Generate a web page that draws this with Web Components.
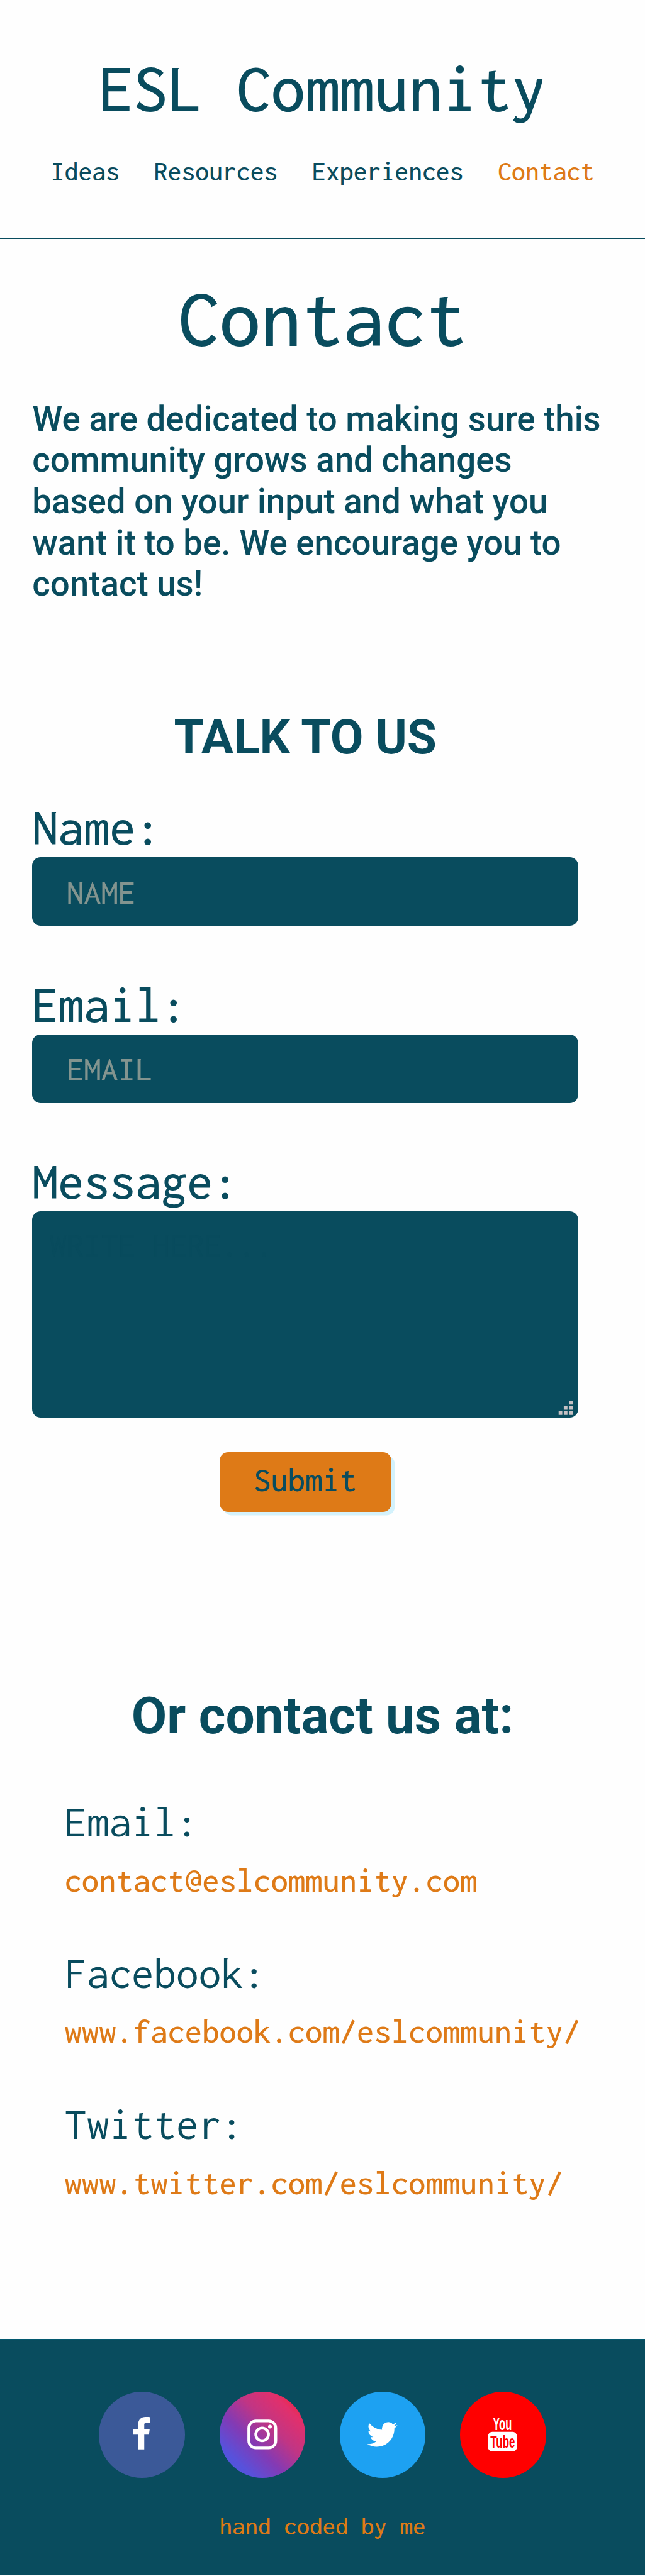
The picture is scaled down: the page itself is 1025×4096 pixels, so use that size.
<!DOCTYPE html>
<html lang="en">
<head>
<meta charset="utf-8">
<title>ESL Community - Contact</title>
<style>
  /* 1rem is one unit of a 375-unit wide layout */
  html { font-size: calc(100vw / 375); }
  body {
    margin: 0;
    --teal: #094c5e;
    --orange: #de7a17;
    --paper: #fefefe;
    --mono: Inconsolata, "Liberation Mono", monospace;
    --sans: Roboto, "Liberation Sans", sans-serif;
    background: var(--paper);
    color: var(--teal);
    font-family: var(--mono);
    font-weight: 500;
  }
</style>
</head>
<body>
<esl-page>
  <site-header slot="header" name="ESL Community">
    <nav-link>Ideas</nav-link>
    <nav-link>Resources</nav-link>
    <nav-link>Experiences</nav-link>
    <nav-link current>Contact</nav-link>
  </site-header>
  <page-intro heading="Contact">We are dedicated to making sure this community grows and changes based on your input and what you want it to be. We encourage you to contact us!</page-intro>
  <contact-form heading="TALK TO US" action="Submit">
    <form-field label="Name:">NAME</form-field>
    <form-field label="Email:">EMAIL</form-field>
    <form-field label="Message:" multiline>WRITE HERE...</form-field>
  </contact-form>
  <contact-list heading="Or contact us at:">
    <contact-item label="Email:">contact@eslcommunity.com</contact-item>
    <contact-item label="Facebook:">www.facebook.com/eslcommunity/</contact-item>
    <contact-item label="Twitter:">www.twitter.com/eslcommunity/</contact-item>
  </contact-list>
  <site-footer slot="footer" credit="hand coded by me">
    <social-icon kind="facebook"></social-icon>
    <social-icon kind="instagram"></social-icon>
    <social-icon kind="twitter"></social-icon>
    <social-icon kind="youtube"></social-icon>
  </site-footer>
</esl-page>

<script>
const define = (tag, render) => customElements.define(tag, class extends HTMLElement {
  connectedCallback() {
    if (this.shadowRoot) return;
    this.attachShadow({ mode: 'open' }).innerHTML = render(this);
  }
});
const attr = (el, name) => el.getAttribute(name) || '';

define('esl-page', () => `
  <style>
    :host { display: flex; flex-direction: column; height: 1498.2rem; overflow: hidden; }
    main { flex: 1; }
  </style>
  <slot name="header"></slot><main><slot></slot></main><slot name="footer"></slot>`);

define('site-header', el => `
  <style>
    :host { display: block; box-sizing: border-box; height: 139rem; padding-top: 30.6rem; border-bottom: 1rem solid var(--teal); }
    .name { font-size: 40rem; line-height: 42rem; text-align: center; }
    nav { display: flex; justify-content: center; gap: 20rem; margin-top: 18.4rem; }
  </style>
  <div class="name">${attr(el, 'name')}</div><nav><slot></slot></nav>`);

define('nav-link', () => `
  <style>
    :host { display: block; font-size: 16rem; line-height: 17rem; }
    :host([current]) { color: var(--orange); }
  </style><slot></slot>`);

define('page-intro', el => `
  <style>
    :host { display: block; padding: 21.3rem 18.75rem 0; }
    h1 { margin: 0; font-weight: 500; font-size: 48rem; line-height: 50rem; text-align: center; }
    p { margin: 21.6rem 0 0; font: 500 20rem/24rem var(--sans); }
  </style>
  <h1>${attr(el, 'heading')}</h1><p><slot></slot></p>`);

define('contact-form', el => `
  <style>
    :host { display: flex; flex-direction: column; width: 317.5rem; margin: 60.6rem 0 0 18.75rem; }
    h2 { margin: 0 0 20.7rem; font: 700 28rem/33rem var(--sans); text-align: center; }
    .fields { display: flex; flex-direction: column; gap: 30.5rem; }
    button { align-self: center; width: 100rem; height: 35rem; margin: 20rem 0 0; padding: 0 0 2.8rem; border: 0; border-radius: 5rem;
      background: var(--orange); color: var(--teal); box-shadow: 2rem 2rem 0 #d4f2fc; font: 500 20rem/21rem var(--mono); }
  </style>
  <h2>${attr(el, 'heading')}</h2><div class="fields"><slot></slot></div><button>${attr(el, 'action')}</button>`);

define('form-field', el => `
  <style>
    :host { display: block; }
    .label { font-size: 30rem; line-height: 31rem; margin-bottom: 1.5rem; }
    .box { box-sizing: border-box; display: flex; align-items: center; height: 40rem; padding: 0.6rem 20rem 0; border-radius: 5rem;
      background: var(--teal); color: #83948f; font-size: 20rem; line-height: 21rem; }
    .area { height: 120rem; align-items: flex-start; justify-content: space-between; padding: 9.2rem 3rem 1.3rem 10rem; color: #084b5d; }
    svg { width: 8.6rem; height: 8.6rem; align-self: flex-end; }
  </style>
  <div class="label">${attr(el, 'label')}</div>
  <div class="box ${el.hasAttribute('multiline') ? 'area' : ''}"><span><slot></slot></span>${el.hasAttribute('multiline') ? `
    <svg viewBox="0 0 25.8 25.8" fill="#c6c1c4"><path d="M18.9 .4h6.4v6.4h-6.4zM9.8 9.5h6.4v6.4h-6.4zM18.9 9.5h6.4v6.4h-6.4zM.8 18.5h6.4v6.4h-6.4zM9.8 18.5h6.4v6.4h-6.4zM18.9 18.5h6.4v6.4h-6.4z"/></svg>` : ''}</div>`);

define('contact-list', el => `
  <style>
    :host { display: block; margin-top: 101.2rem; }
    h2 { margin: 0 0 30.6rem; font: 700 30rem/35rem var(--sans); text-align: center; }
    .items { display: flex; flex-direction: column; gap: 30.3rem; padding-left: 37.5rem; }
  </style>
  <h2>${attr(el, 'heading')}</h2><div class="items"><slot></slot></div>`);

define('contact-item', el => `
  <style>
    :host { display: flex; flex-direction: column; gap: 9.7rem; }
    .label { font-weight: 400; font-size: 26rem; line-height: 27rem; }
    .link { color: var(--orange); font-size: 20rem; line-height: 21rem; }
  </style>
  <div class="label">${attr(el, 'label')}</div><div class="link"><slot></slot></div>`);

define('site-footer', el => `
  <style>
    :host { display: block; box-sizing: border-box; height: 137.5rem; padding-top: 30rem; border-top: 1rem solid #02586f; background: var(--teal); }
    .icons { display: flex; justify-content: center; gap: 20rem; }
    .credit { margin-top: 20.1rem; color: var(--orange); font-size: 15rem; line-height: 16rem; text-align: center; }
  </style>
  <div class="icons"><slot></slot></div><div class="credit">${attr(el, 'credit')}</div>`);

const icons = {
  facebook: ['#3b5998', '<path d="M89.3 44.3V54H83.5C80 54 79.3 55.5 79.3 58.5V65H88.8L87.5 75H79.3V100.7H68.7V75H59.7V65H68.7V57C68.7 48.5 74 44 81.5 44C85 44 88 44.1 89.3 44.3Z"/>'],
  instagram: ['linear-gradient(45deg, #405de6, #5851db, #833ab4, #c13584, #e1306c, #fd1d1d)',
    '<g fill="none" stroke="#fff" stroke-width="4.9"><rect x="50.9" y="50.9" width="47" height="47.2" rx="12.5"/><circle cx="74.2" cy="74.5" r="11.1"/></g><circle cx="87.8" cy="60.8" r="3.3"/>'],
  twitter: ['#1da1f2', '<path transform="translate(44.07 44.4) scale(.0336)" d="M1684 408q-67 98-162 167 1 14 1 42 0 130-38 259.5t-115.5 248.5-184.5 210.5-258 146-323 54.5q-271 0-496-145 35 4 78 4 225 0 401-138-105-2-188-64.5t-114-159.5q33 5 61 5 43 0 85-11-112-23-185.5-111.5t-73.5-205.5v-4q68 38 146 41-66-44-105-115t-39-154q0-88 44-163 121 149 294.5 238.5t371.5 99.5q-8-38-8-74 0-134 94.5-228.5t228.5-94.5q140 0 236 102 109-21 205-78-37 115-142 178 93-10 186-50z"/>'],
  youtube: ['#f00', '<text x="57.3" y="67" font-size="32" textLength="33" lengthAdjust="spacingAndGlyphs">You</text><rect x="48.9" y="70" width="50.4" height="34.3" rx="7.5"/><text x="53" y="98" font-size="30.5" textLength="43" lengthAdjust="spacingAndGlyphs" fill="#f00">Tube</text>']
};
define('social-icon', el => {
  const [paint, art] = icons[attr(el, 'kind')];
  return `
  <style>
    :host { display: block; width: 50rem; height: 50rem; border-radius: 50%; background: ${paint}; }
    svg { display: block; width: 100%; height: 100%; font-family: "Liberation Sans Narrow", "Liberation Sans", sans-serif; font-weight: 700; }
  </style>
  <svg viewBox="0 0 150 150" fill="#fff">${art}</svg>`;
});
</script>
</body>
</html>
